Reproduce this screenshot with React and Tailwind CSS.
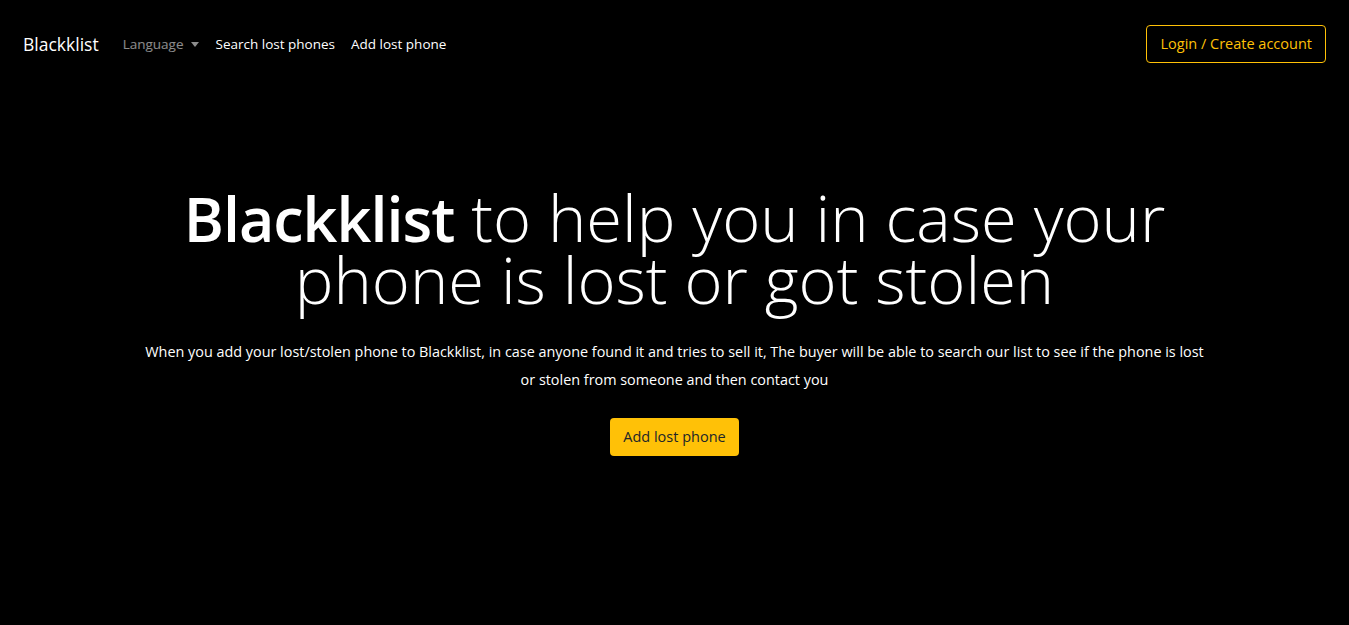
export default function App() {
	const font = { fontFamily: '"Open Sans", "Noto Sans", sans-serif' };

	return (
		<div className="min-h-screen bg-black text-white" style={font}>
			{/* Navbar */}
			<nav className="flex items-center justify-between px-[23px] pt-[25px]">
				<div className="flex items-center">
					<span className="text-[17.5px] text-white mr-[24px]">Blackklist</span>
					<div className="flex items-center text-[13.5px]">
						<button className="flex items-center text-white/55 cursor-pointer mr-[17px]">
							Language
							<span className="ml-[7px] inline-block w-0 h-0 border-l-[4px] border-r-[4px] border-t-[5px] border-l-transparent border-r-transparent border-t-white/55" />
						</button>
						<a className="text-white mr-[16px]">Search lost phones</a>
						<a className="text-white">Add lost phone</a>
					</div>
				</div>
				<button className="h-[38px] px-[13px] border border-[#ffc107] rounded-[4px] text-[#ffc107] text-[14.5px]">
					Login / Create account
				</button>
			</nav>

			{/* Hero */}
			<main className="flex flex-col items-center text-center pt-[124px]">
				<h1 className="text-[65px] leading-[60px] font-light max-w-[1040px]">
					<span className="font-semibold text-[61px] tracking-[-1px]">Blackklist</span> to help you in case your phone is lost or got stolen
				</h1>
				<p className="mt-[29px] max-w-[1062px] text-[14.4px] leading-[28px]">
					When you add your lost/stolen phone to Blackklist, in case anyone found it and tries to sell it, The buyer will be able to search our list to see if the phone is lost or stolen from someone and then contact you
				</p>
				<button className="mt-[24px] h-[38px] px-[13px] bg-[#ffc107] rounded-[4px] text-[#212529] text-[14.5px]">
					Add lost phone
				</button>
			</main>
		</div>
	);
}
